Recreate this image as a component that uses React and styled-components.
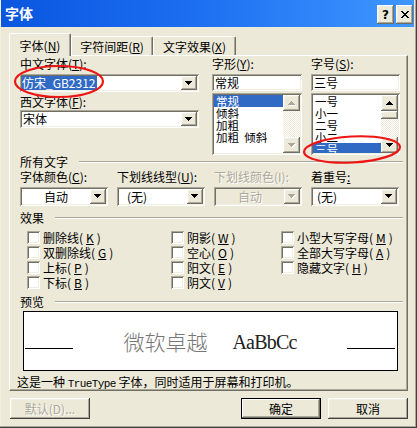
import React from "react";
import styled, {createGlobalStyle, css} from "styled-components";

const FACE = "#ECE9D8";
const LIGHT = "#F1EFE2";
const SHADOW = "#ACA899";
const DARK = "#716F64";

const raised = css`
  box-shadow: inset -1px -1px ${DARK}, inset 1px 1px #fff, inset -2px -2px ${SHADOW}, inset 2px 2px ${LIGHT};
`;

const sunken = css`
  box-shadow: inset 1px 1px ${SHADOW}, inset -1px -1px #fff, inset 2px 2px ${DARK}, inset -2px -2px ${LIGHT};
`;

const GlobalStyle = createGlobalStyle`
  html, body {
    margin: 0;
    padding: 0;
    background: ${FACE};
  }
  body {
    font-family: "Noto Sans CJK SC", "Noto Sans", sans-serif;
    font-size: 12px;
    color: #000;
  }
  #root {
    width: 417px;
    height: 428px;
  }
`;

const DOWN = "M0 0h7v1H0zM1 1h5v1H1zM2 2h3v1H2zM3 3h1v1H3z";
const UP = "M3 0h1v1H3zM2 1h3v1H2zM1 2h5v1H1zM0 3h7v1H0z";

const Arrow = ({up, disabled}) => (
  <svg width="8" height="5" viewBox="0 0 8 5" shapeRendering="crispEdges">
    {disabled && <path transform="translate(1,1)" fill="#fff" d={up ? UP : DOWN}/>}
    <path fill={disabled ? SHADOW : "#000"} d={up ? UP : DOWN}/>
  </svg>
);

const CloseGlyph = () => (
  <svg width="8" height="7" viewBox="0 0 8 7" shapeRendering="crispEdges">
    <path fill="#000"
          d="M0 0h2v1H0zM6 0h2v1H6zM1 1h2v1H1zM5 1h2v1H5zM2 2h4v1H2zM3 3h2v1H3zM2 4h4v1H2zM1 5h2v1H1zM5 5h2v1H5zM0 6h2v1H0zM6 6h2v1H6z"/>
  </svg>
);

const Key = ({children}) => <KeyLetter>{children}</KeyLetter>;

export default function App() {
  return (
    <>
      <GlobalStyle/>
      <Window>
        <TitleBar>
          <Title>字体</Title>
          <CaptionButtons>
            <CaptionButton>?</CaptionButton>
            <CaptionButton><CloseGlyph/></CaptionButton>
          </CaptionButtons>
        </TitleBar>

        <Body>
          <TabStrip>
            <Tab $w={62} $active>字体(<Key>N</Key>)</Tab>
            <Tab $w={82}>字符间距(<Key>R</Key>)</Tab>
            <Tab $w={83}>文字效果(<Key>X</Key>)</Tab>
          </TabStrip>

          <Panel>
            <TopRow>
              <Col $w={179}>
                <Label>中文字体(<Key>T</Key>):</Label>
                <Combo $mt={3}>
                  <FieldText><Selected>仿宋_GB2312</Selected></FieldText>
                  <DropButton><Arrow/></DropButton>
                </Combo>
                <Label $mt={3}>西文字体(<Key>F</Key>):</Label>
                <Combo $mt={1}>
                  <FieldText $pad={1}>宋体</FieldText>
                  <DropButton><Arrow/></DropButton>
                </Combo>
              </Col>

              <Col $w={90} $ml={13}>
                <Label>字形(<Key>Y</Key>):</Label>
                <Input>常规</Input>
                <ListBox>
                  <ListItems>
                    <ListItem $selected>常规</ListItem>
                    <ListItem>倾斜</ListItem>
                    <ListItem>加粗</ListItem>
                    <ListItem>加粗&nbsp;&nbsp;倾斜</ListItem>
                  </ListItems>
                  <ScrollBar>
                    <ScrollButton><Arrow up disabled/></ScrollButton>
                    <Track/>
                    <ScrollButton><Arrow disabled/></ScrollButton>
                  </ScrollBar>
                </ListBox>
              </Col>

              <Col $w={89} $ml={9}>
                <Label>字号(<Key>S</Key>):</Label>
                <Input>三号</Input>
                <ListBox>
                  <ListItems>
                    <ListItem>一号</ListItem>
                    <ListItem>小一</ListItem>
                    <ListItem>二号</ListItem>
                    <ListItem>小二</ListItem>
                    <ListItem $selected>三号</ListItem>
                  </ListItems>
                  <ScrollBar>
                    <ScrollButton><Arrow up/></ScrollButton>
                    <Thumb/>
                    <Track/>
                    <ScrollButton><Arrow/></ScrollButton>
                  </ScrollBar>
                </ListBox>
              </Col>
            </TopRow>

            <GroupHeader>所有文字</GroupHeader>
            <FourGrid $mt={1}>
              <Label>字体颜色(<Key>C</Key>):</Label>
              <Label>下划线线型(<Key>U</Key>):</Label>
              <Label $disabled>下划线颜色(I):</Label>
              <Label>着重号<Key>:</Key></Label>
            </FourGrid>
            <FourGrid $mt={3}>
              <Combo $h={19}>
                <FieldText $center>自动</FieldText>
                <DropButton><Arrow/></DropButton>
              </Combo>
              <Combo $h={19}>
                <FieldText $pad={8}>(无)</FieldText>
                <DropButton><Arrow/></DropButton>
              </Combo>
              <Combo $h={19} $disabled>
                <FieldText $center $disabled>自动</FieldText>
                <DropButton><Arrow disabled/></DropButton>
              </Combo>
              <Combo $h={19}>
                <FieldText $pad={4}>(无)</FieldText>
                <DropButton><Arrow/></DropButton>
              </Combo>
            </FourGrid>

            <GroupHeader $mt={5}>效果</GroupHeader>
            <Effects>
              <EffectCol>
                <Check><Box/>删除线(<Key>K</Key>)</Check>
                <Check><Box/>双删除线(<Key>G</Key>)</Check>
                <Check><Box/>上标(<Key>P</Key>)</Check>
                <Check><Box/>下标(<Key>B</Key>)</Check>
              </EffectCol>
              <EffectCol>
                <Check><Box/>阴影(<Key>W</Key>)</Check>
                <Check><Box/>空心(<Key>O</Key>)</Check>
                <Check><Box/>阳文(<Key>E</Key>)</Check>
                <Check><Box/>阴文(<Key>V</Key>)</Check>
              </EffectCol>
              <EffectCol>
                <Check><Box/>小型大写字母(<Key>M</Key>)</Check>
                <Check><Box/>全部大写字母(<Key>A</Key>)</Check>
                <Check><Box/>隐藏文字(<Key>H</Key>)</Check>
              </EffectCol>
            </Effects>

            <GroupHeader $mt={6}>预览</GroupHeader>
            <Preview>
              <BaseLine/>
              <Sample>
                <SampleCJK>微软卓越</SampleCJK>
                <SampleLatin>AaBbCc</SampleLatin>
              </Sample>
              <BaseLine/>
            </Preview>
            <Info>这是一种 <Mono>TrueType</Mono> 字体，同时适用于屏幕和打印机。</Info>
          </Panel>

          <ButtonRow>
            <Button $disabled>默认(D)...</Button>
            <Spacer/>
            <Button $default>确定</Button>
            <Button>取消</Button>
          </ButtonRow>
        </Body>

        <Marks width="417" height="428" viewBox="0 0 417 428">
          <ellipse cx="59" cy="81.5" rx="44" ry="15.5" fill="none" stroke="#EE1515" strokeWidth="2.2"/>
          <ellipse cx="352" cy="149.5" rx="48" ry="13" transform="rotate(-3 352 149.5)"
                   fill="none" stroke="#EE1515" strokeWidth="2.2"/>
        </Marks>
      </Window>
    </>
  );
}

const Window = styled.div`
  position: relative;
  width: 417px;
  height: 428px;
  box-sizing: border-box;
  background: ${FACE};
  box-shadow: inset -1px -1px #404040, inset -2px -2px ${SHADOW}, inset 1px 0 ${LIGHT};
  display: flex;
  flex-direction: column;
  overflow: hidden;
`;

const TitleBar = styled.div`
  height: 27px;
  margin: 0 3px 0 1px;
  padding: 0 1px 0 4px;
  display: flex;
  align-items: center;
  background: linear-gradient(to right, #0A56DF 0%, #1C6DF0 45%, #3E97FF 100%);
`;

const Title = styled.div`
  flex: 1;
  color: #fff;
  font-weight: 700;
  font-size: 14px;
  line-height: 27px;
`;

const CaptionButtons = styled.div`
  display: flex;
  gap: 2px;
  margin-top: 2px;
`;

const CaptionButton = styled.div`
  width: 17px;
  height: 19px;
  box-sizing: border-box;
  background: ${FACE};
  ${raised};
  display: flex;
  align-items: center;
  justify-content: center;
  font-family: "DejaVu Sans", sans-serif;
  font-weight: 700;
  font-size: 12px;
  line-height: 1;
`;

const Body = styled.div`
  padding: 6px 9px 0 9px;
  display: flex;
  flex-direction: column;
`;

const TabStrip = styled.div`
  display: flex;
  align-items: flex-start;
  height: 22px;
`;

const Tab = styled.div`
  position: relative;
  z-index: ${p => p.$active ? 2 : 0};
  width: ${p => p.$w}px;
  height: ${p => p.$active ? 23 : 19}px;
  margin-top: ${p => p.$active ? 0 : 3}px;
  box-sizing: border-box;
  padding-top: 2px;
  background: ${FACE};
  border-top: 1px solid #fff;
  border-left: 1px solid #fff;
  border-right: 1px solid ${DARK};
  box-shadow: inset -1px 0 ${SHADOW};
  border-radius: 2px 2px 0 0;
  display: flex;
  align-items: center;
  justify-content: center;
  line-height: 14px;
  white-space: nowrap;
`;

const Panel = styled.div`
  width: 399px;
  height: 336px;
  box-sizing: border-box;
  border-top: 1px solid #fff;
  border-left: 1px solid #fff;
  border-right: 1px solid ${DARK};
  border-bottom: 1px solid ${DARK};
  box-shadow: inset -1px -1px ${SHADOW};
  padding: 1px 4px 0 10px;
  display: flex;
  flex-direction: column;
`;

const TopRow = styled.div`
  display: flex;
  height: 98px;
`;

const Col = styled.div`
  width: ${p => p.$w}px;
  margin-left: ${p => p.$ml || 0}px;
  display: flex;
  flex-direction: column;
`;

const Label = styled.div`
  height: 14px;
  line-height: 14px;
  margin-top: ${p => p.$mt || 0}px;
  white-space: nowrap;
  color: ${p => p.$disabled ? SHADOW : "#000"};
  text-shadow: ${p => p.$disabled ? "1px 1px #fff" : "none"};
`;

const KeyLetter = styled.span`
  text-decoration: underline;
  text-underline-offset: 1px;
`;

const Combo = styled.div`
  display: flex;
  height: ${p => p.$h || 18}px;
  margin-top: ${p => p.$mt || 0}px;
  padding: 2px;
  box-sizing: border-box;
  background: ${p => p.$disabled ? FACE : "#fff"};
  ${sunken};
`;

const FieldText = styled.div`
  flex: 1;
  display: flex;
  align-items: center;
  justify-content: ${p => p.$center ? "center" : "flex-start"};
  padding-left: ${p => p.$pad || 0}px;
  overflow: hidden;
  white-space: nowrap;
  line-height: 14px;
  color: ${p => p.$disabled ? SHADOW : "#000"};
  text-shadow: ${p => p.$disabled ? "1px 1px #fff" : "none"};
`;

const Selected = styled.span`
  background: #316AC5;
  color: #fff;
  padding: 0 1px 0 0;
  line-height: 14px;
`;

const DropButton = styled.div`
  width: 16px;
  background: ${FACE};
  ${raised};
  display: flex;
  align-items: center;
  justify-content: center;
`;

const Input = styled.div`
  height: 17px;
  margin-top: 3px;
  box-sizing: border-box;
  padding: 2px 2px 0 3px;
  background: #fff;
  ${sunken};
  line-height: 13px;
  white-space: nowrap;
`;

const ListBox = styled.div`
  height: 62px;
  margin-top: 2px;
  box-sizing: border-box;
  padding: 2px;
  background: #fff;
  ${sunken};
  display: flex;
`;

const ListItems = styled.div`
  flex: 1;
  overflow: hidden;
`;

const ListItem = styled.div`
  height: 12px;
  line-height: 12px;
  font-size: 11.5px;
  padding-left: 2px;
  white-space: nowrap;
  overflow: hidden;
  background: ${p => p.$selected ? "#316AC5" : "transparent"};
  color: ${p => p.$selected ? "#fff" : "#000"};
`;

const ScrollBar = styled.div`
  width: 17px;
  display: flex;
  flex-direction: column;
  background: repeating-conic-gradient(#fff 0 25%, ${FACE} 0 50%) 0 0 / 2px 2px;
`;

const ScrollButton = styled.div`
  height: 16px;
  flex-shrink: 0;
  background: ${FACE};
  ${raised};
  display: flex;
  align-items: center;
  justify-content: center;
`;

const Thumb = styled.div`
  height: 8px;
  flex-shrink: 0;
  background: ${FACE};
  ${raised};
`;

const Track = styled.div`
  flex: 1;
`;

const GroupHeader = styled.div`
  display: flex;
  align-items: center;
  gap: 11px;
  height: 14px;
  line-height: 14px;
  margin-top: ${p => p.$mt || 0}px;
  white-space: nowrap;

  &::after {
    content: "";
    flex: 1;
    border-top: 1px solid ${SHADOW};
    border-bottom: 1px solid #fff;
  }
`;

const FourGrid = styled.div`
  display: grid;
  grid-template-columns: repeat(4, 88px);
  column-gap: 9px;
  margin-top: ${p => p.$mt || 0}px;
`;

const Effects = styled.div`
  display: grid;
  grid-template-columns: 144px 110px 1fr;
  padding-left: 7px;
  margin-top: 6px;
`;

const EffectCol = styled.div`
  display: flex;
  flex-direction: column;
  gap: 2px;
`;

const Check = styled.div`
  display: flex;
  align-items: center;
  gap: 3px;
  height: 13px;
  line-height: 13px;
  white-space: nowrap;
`;

const Box = styled.span`
  width: 13px;
  height: 13px;
  flex-shrink: 0;
  box-sizing: border-box;
  background: #fff;
  ${sunken};
`;

const Preview = styled.div`
  width: 375px;
  height: 60px;
  margin: 2px 0 0 3px;
  box-sizing: border-box;
  border: 1px solid #000;
  background: #fff;
  padding: 0 2px 0 1px;
  display: flex;
  align-items: center;
`;

const BaseLine = styled.div`
  width: 48px;
  height: 1px;
  margin-top: 14px;
  background: #000;
`;

const Sample = styled.div`
  flex: 1;
  display: flex;
  align-items: center;
  justify-content: center;
  gap: 25px;
`;

const SampleCJK = styled.span`
  font-size: 21px;
  line-height: 1;
  color: #777;
  font-weight: 300;
`;

const SampleLatin = styled.span`
  font-family: "Liberation Serif", serif;
  font-size: 20px;
  line-height: 1;
  letter-spacing: -0.8px;
  color: #222;
  margin-top: 1px;
`;

const Info = styled.div`
  height: 14px;
  line-height: 14px;
  margin: 4px 0 0 -3px;
  white-space: nowrap;
`;

const Mono = styled.span`
  font-family: "Liberation Mono", monospace;
  font-size: 11px;
  letter-spacing: -0.6px;
`;

const ButtonRow = styled.div`
  display: flex;
  gap: 7px;
  margin-top: 7px;
  padding-left: 1px;
`;

const Spacer = styled.div`
  flex: 1;
`;

const Button = styled.div`
  width: 80px;
  height: 21px;
  box-sizing: border-box;
  background: ${FACE};
  border: 1px solid ${p => p.$default ? "#000" : "transparent"};
  box-shadow: ${p => p.$default
    ? `inset -1px -1px ${DARK}, inset 1px 1px #fff, inset -2px -2px ${SHADOW}`
    : `inset -1px -1px ${DARK}, inset 1px 1px #fff, inset -2px -2px ${SHADOW}, inset 2px 2px ${LIGHT}`};
  display: flex;
  align-items: center;
  justify-content: center;
  line-height: 14px;
  white-space: nowrap;
  color: ${p => p.$disabled ? SHADOW : "#000"};
  text-shadow: ${p => p.$disabled ? "1px 1px #fff" : "none"};
  ${p => !p.$default && css`
    border: none;
    box-shadow: inset -1px -1px #404040, inset 1px 1px #fff, inset -2px -2px ${SHADOW}, inset 2px 2px ${LIGHT};
  `}
`;

const Marks = styled.svg`
  position: absolute;
  left: 0;
  top: 0;
  pointer-events: none;
`;
